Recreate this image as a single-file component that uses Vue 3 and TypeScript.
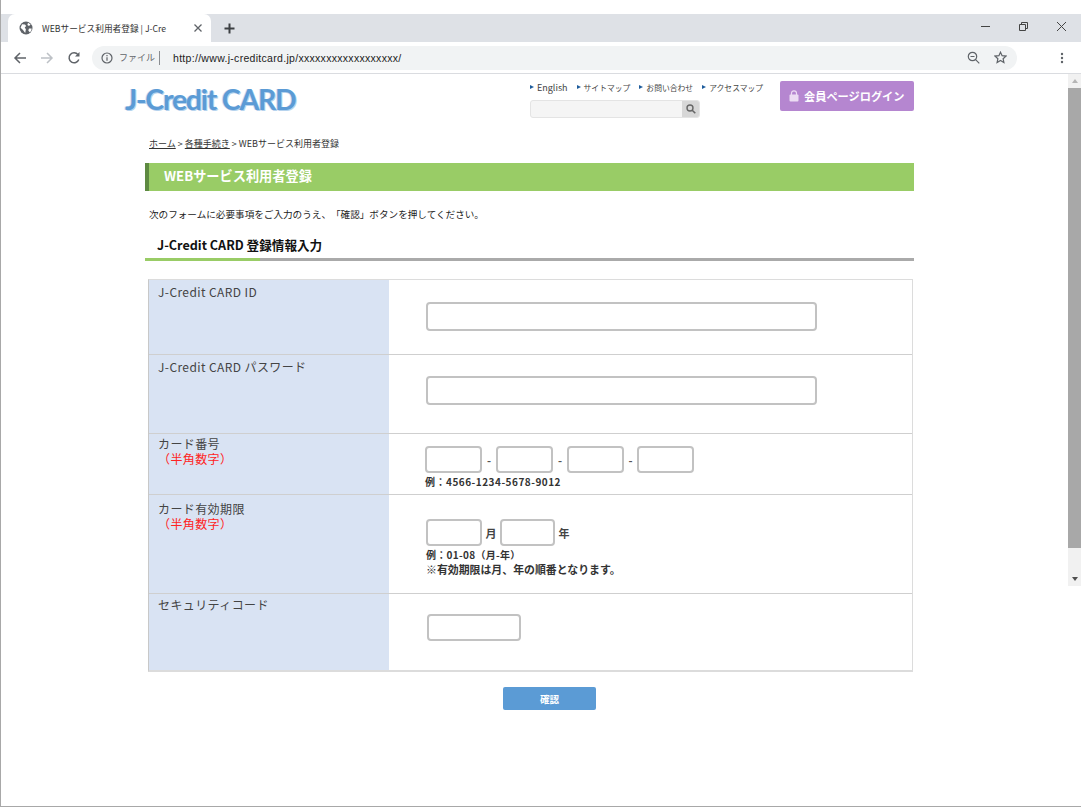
<script setup lang="ts">
const navLinks: string[] = ['English', 'サイトマップ', 'お問い合わせ', 'アクセスマップ']
</script>

<template>
  <div class="window">
    <header class="chrome">
      <div class="tabstrip">
        <div class="tab">
          <svg class="globe" width="14" height="14" viewBox="0 0 14 14">
            <circle cx="7" cy="7" r="6.5" fill="#5f6368" />
            <path d="M3 3.2l3 .3 1.2 1.6-1.5 1.4 1.2 1.8-.7 3.6L4 9 1.6 6.8zM9 1.8l2.6 1.7L10 5l-1.6-1zM10 7.4h2.6c0 1.6-.7 3-1.9 3.9L9.300 9.600z" fill="#fff" />
          </svg>
          <span class="tab-title">WEBサービス利用者登録 | J-Cre</span>
          <svg class="tab-close" width="10" height="10" viewBox="0 0 10 10">
            <path d="M1.500 1.500l7 7M8.500 1.500l-7 7" stroke="#5f6368" stroke-width="1.300" />
          </svg>
        </div>
        <svg class="new-tab" width="11" height="11" viewBox="0 0 11 11">
          <path d="M5.500.5v10M.5 5.500h10" stroke="#3c4043" stroke-width="2" />
        </svg>
        <div class="window-controls">
          <svg width="11" height="11" viewBox="0 0 11 11"><path d="M1 5.500h9" stroke="#444" /></svg>
          <svg width="11" height="11" viewBox="0 0 11 11"><path d="M1.500 3.500h6v6h-6zM3.500 3.500v-2h6v6h-2" fill="none" stroke="#444" /></svg>
          <svg width="11" height="11" viewBox="0 0 11 11"><path d="M1 1l9 9M10 1l-9 9" stroke="#444" /></svg>
        </div>
      </div>
      <div class="toolbar">
        <svg class="tool back" width="14" height="14" viewBox="0 0 14 14">
          <path d="M13 7H2M7 2L2 7l5 5" fill="none" stroke="#5f6368" stroke-width="1.500" />
        </svg>
        <svg class="tool forward" width="14" height="14" viewBox="0 0 14 14">
          <path d="M1 7h11M7 2l5 5-5 5" fill="none" stroke="#bdc1c6" stroke-width="1.500" />
        </svg>
        <svg class="tool reload" width="14" height="14" viewBox="0 0 14 14">
          <path d="M11.800 8.500A5 5 0 1 1 11 3.600" fill="none" stroke="#5f6368" stroke-width="1.500" />
          <path d="M12.500 1v4.500H8z" fill="#5f6368" />
        </svg>
        <div class="omnibox">
          <svg class="info" width="12" height="12" viewBox="0 0 12 12">
            <circle cx="6" cy="6" r="5" fill="none" stroke="#5f6368" stroke-width="1.200" />
            <path d="M6 5.200v3.600M6 3v1.200" stroke="#5f6368" stroke-width="1.200" />
          </svg>
          <span class="scheme">ファイル</span>
          <span class="scheme-sep"></span>
          <span class="url">http://www.j-creditcard.jp/xxxxxxxxxxxxxxxxxx/</span>
          <svg class="zoom-out" width="13" height="13" viewBox="0 0 13 13">
            <circle cx="5.500" cy="5.500" r="4.200" fill="none" stroke="#5f6368" stroke-width="1.200" />
            <path d="M8.600 8.600L12.300 12.300M3.500 5.500h4" stroke="#5f6368" stroke-width="1.200" />
          </svg>
          <svg class="star" width="13" height="13" viewBox="0 0 13 13">
            <path d="M6.500 1.200l1.600 3.500 3.800.4-2.800 2.600.8 3.800-3.400-2-3.400 2 .8-3.800L1.100 5.100l3.800-.4z" fill="none" stroke="#5f6368" stroke-width="1.200" />
          </svg>
        </div>
        <svg class="menu" width="4" height="12" viewBox="0 0 4 12">
          <circle cx="2" cy="2" r="1.200" fill="#5f6368" />
          <circle cx="2" cy="6" r="1.200" fill="#5f6368" />
          <circle cx="2" cy="10" r="1.200" fill="#5f6368" />
        </svg>
      </div>
    </header>

    <main class="page">
      <div class="site-header">
        <div class="logo">J-Credit CARD</div>
        <div class="util">
          <nav class="util-nav">
            <a v-for="link in navLinks" :key="link" class="util-link">{{ link }}</a>
          </nav>
          <div class="search">
            <span class="search-btn">
              <svg width="10" height="10" viewBox="0 0 10 10">
                <circle cx="4" cy="4" r="3" fill="none" stroke="#666" stroke-width="1.400" />
                <path d="M6.200 6.200L9.300 9.300" stroke="#666" stroke-width="1.600" />
              </svg>
            </span>
          </div>
        </div>
        <button class="login" type="button">
          <svg width="10" height="12" viewBox="0 0 10 12">
            <path d="M2.500 5V3.300a2.500 2.500 0 0 1 5 0V5" fill="none" stroke="#ecdcf3" stroke-width="1.200" />
            <rect x=".5" y="4.500" width="9" height="7" rx="1" fill="#ecdcf3" />
          </svg>
          <span>会員ページログイン</span>
        </button>
      </div>

      <div class="content">
        <p class="crumbs"><a>ホーム</a> &gt; <a>各種手続き</a> &gt; WEBサービス利用者登録</p>
        <h1 class="title">WEBサービス利用者登録</h1>
        <p class="lead">次のフォームに必要事項をご入力のうえ、「確認」ボタンを押してください。</p>
        <h2 class="subtitle">J-Credit CARD 登録情報入力</h2>

        <form class="form-table">
          <div class="row row-id">
            <div class="label">J-Credit CARD ID</div>
            <div class="field"><input class="input wide" type="text" /></div>
          </div>
          <div class="row row-pass">
            <div class="label">J-Credit CARD パスワード</div>
            <div class="field"><input class="input wide" type="password" /></div>
          </div>
          <div class="row row-card">
            <div class="label">カード番号<br /><span class="req">（半角数字）</span></div>
            <div class="field">
              <div class="inline">
                <input class="input card" type="text" /><span class="dash">-</span>
                <input class="input card" type="text" /><span class="dash">-</span>
                <input class="input card" type="text" /><span class="dash">-</span>
                <input class="input card" type="text" />
              </div>
              <div class="hint hint-card">例：4566-1234-5678-9012</div>
            </div>
          </div>
          <div class="row row-exp">
            <div class="label">カード有効期限<br /><span class="req">（半角数字）</span></div>
            <div class="field">
              <div class="inline">
                <input class="input month" type="text" /><span class="unit">月</span>
                <input class="input year" type="text" /><span class="unit">年</span>
              </div>
              <div class="hint">例：01-08（月-年）</div>
              <div class="hint hint-note">※有効期限は月、年の順番となります。</div>
            </div>
          </div>
          <div class="row row-cvc">
            <div class="label">セキュリティコード</div>
            <div class="field"><input class="input cvc" type="text" /></div>
          </div>
        </form>

        <div class="actions"><button class="confirm" type="button">確認</button></div>
      </div>

      <div class="scrollbar">
        <span class="arrow up"></span>
        <span class="thumb"></span>
        <span class="arrow down"></span>
      </div>
    </main>
  </div>
</template>

<style>
html, body { margin: 0; overflow: hidden; background: #fff; }
</style>

<style scoped>
.window {
  box-sizing: border-box;
  width: 1081px;
  height: 807px;
  border-left: 1px solid #a8a8a8;
  border-bottom: 1px solid #a8a8a8;
  background: #fff;
  font-family: "Noto Sans CJK JP", "Noto Sans", sans-serif;
  color: #222;
  display: flex;
  flex-direction: column;
  overflow: hidden;
  text-spacing-trim: space-all;
}
.chrome { padding-top: 14px; flex: none; }
.tabstrip {
  height: 28px;
  background: #dee1e6;
  display: flex;
  align-items: stretch;
  padding-left: 7px;
}
.tab {
  width: 203px;
  box-sizing: border-box;
  background: #fff;
  border-radius: 7px 7px 0 0;
  display: flex;
  align-items: center;
  padding-left: 11px;
}
.globe { flex: none; }
.tab-title {
  margin-left: 9px;
  font-size: 8.700px;
  white-space: nowrap;
  color: #333;
  width: 127px;
}
.tab-close { margin-left: 24px; flex: none; }
.new-tab { margin: 9px 0 0 13px; }
.window-controls {
  margin-left: auto;
  display: flex;
  gap: 27px;
  padding: 7px 14px 0 0;
}
.window-controls svg { display: block; }
.toolbar {
  height: 32px;
  box-sizing: border-box;
  background: #fff;
  border-bottom: 1px solid #dadce0;
  display: flex;
  align-items: center;
  padding: 3px 0 3px 12px;
  position: relative;
}
.tool { flex: none; }
.forward { margin-left: 13px; }
.reload { margin-left: 13px; }
.omnibox {
  margin-left: 11px;
  width: 925px;
  height: 24px;
  background: #f1f3f4;
  border-radius: 12px;
  display: flex;
  align-items: center;
  padding-left: 9px;
  box-sizing: border-box;
  flex: none;
}
.scheme { margin-left: 6px; font-size: 9px; color: #5f6368; width: 40px; white-space: nowrap; }
.scheme-sep { width: 1px; height: 14px; background: #8a8d91; margin-right: 13px; flex: none; }
.url { font-size: 10.500px; color: #222; font-family: "Liberation Sans", sans-serif; white-space: nowrap; width: 798px; letter-spacing: .3px; flex: none; }
.zoom-out { margin-left: -4px; flex: none; }
.star { margin-left: 14px; flex: none; }
.menu { margin-left: 43px; flex: none; }

.page { position: relative; flex: 1; min-height: 0; }
.site-header { display: flex; height: 60px; box-sizing: border-box; padding-left: 124px; }
.logo {
  margin-top: 7px;
  width: 405px;
  height: 36px;
  font-family: Lato, sans-serif;
  font-weight: 700;
  font-size: 28.500px;
  letter-spacing: -1.250px;
  line-height: 36px;
  color: #5b9bd5;
  text-shadow: 1px 1px 0 #b6d3ee, -1px 0 0 #cfe2f4;
  white-space: nowrap;
}
.util { width: 250px; padding-top: 6px; }
.util-nav { display: flex; height: 14px; align-items: center; gap: 9px; }
.util-link {
  font-size: 7.800px;
  color: #444;
  white-space: nowrap;
  display: flex;
  align-items: center;
}
.util-link:first-child { font-size: 9px; }
.util-link::before {
  content: "";
  border-left: 4px solid #1f5d9c;
  border-top: 2.500px solid transparent;
  border-bottom: 2.500px solid transparent;
  margin-right: 3px;
}
.search {
  margin-top: 6px;
  width: 170px;
  height: 18px;
  box-sizing: border-box;
  background: #f5f5f5;
  border: 1px solid #e4e4e4;
  border-radius: 3px;
  display: flex;
  justify-content: flex-end;
  overflow: hidden;
}
.search-btn {
  width: 17px;
  background: #d7d7d7;
  display: flex;
  align-items: center;
  justify-content: center;
}
.login {
  margin-top: 7px;
  width: 134px;
  height: 30px;
  border: 0;
  border-radius: 2px;
  background: #b586d0;
  color: #fff;
  font-family: inherit;
  font-size: 11.200px;
  font-weight: 700;
  display: flex;
  align-items: center;
  gap: 5px;
  padding: 0 0 0 9px;
  white-space: nowrap;
}
.content { width: 769px; margin-left: 144px; }
.crumbs { margin: 3px 0 0 4px; height: 14px; font-size: 9px; line-height: 14px; color: #333; white-space: nowrap; }
.crumbs a { text-decoration: underline; }
.title {
  margin: 12px 0 0;
  height: 28px;
  box-sizing: border-box;
  background: #99cc66;
  border-left: 4px solid #5e8a42;
  padding-left: 15px;
  color: #fff;
  font-size: 13.200px;
  font-weight: 700;
  line-height: 26px;
  white-space: nowrap;
}
.lead { margin: 16px 0 0 4px; font-size: 9.600px; line-height: 14px; color: #222; white-space: nowrap; }
.subtitle {
  margin: 10px 0 0;
  height: 30px;
  box-sizing: border-box;
  padding-left: 12px;
  font-size: 12.600px;
  font-weight: 700;
  line-height: 27px;
  color: #111;
  border-bottom: 3px solid #aaa;
  position: relative;
  white-space: nowrap;
}
.subtitle::after {
  content: "";
  position: absolute;
  left: 0;
  bottom: -3px;
  width: 115px;
  height: 3px;
  background: #99cc66;
}
.form-table {
  margin: 18px 0 0 3px;
  width: 765px;
  box-sizing: border-box;
  border: 1px solid #dcdcdc;
  border-left-color: #c8c8c8;
  border-bottom-width: 2px;
  display: flex;
  flex-direction: column;
}
.row { display: grid; grid-template-columns: 240px 1fr; border-bottom: 1px solid #cfcfcf; }
.row:last-child { border-bottom: 0; }
.row-id { height: 74px; }
.row-pass { height: 78px; }
.row-card { height: 60px; }
.row-exp { height: 98px; }
.row-cvc { height: 76px; }
.label {
  background: #d9e3f3;
  padding: 4px 0 0 9px;
  font-size: 12px;
  line-height: 15px;
  letter-spacing: .4px;
  color: #444;
  white-space: nowrap;
}
.row-card .label { padding-top: 2px; }
.row-exp .label { padding-top: 6px; }
.row-cvc .label { padding-top: 3px; }
.req { color: #f22; padding-left: 0; }
.field { padding-left: 37px; }
.input {
  display: block;
  box-sizing: border-box;
  border: 2px solid #c2c2c2;
  border-radius: 4px;
  background: #fff;
  padding: 0;
  margin: 0;
  outline: none;
}
.wide { width: 391px; height: 29px; }
.row-id .field { padding-top: 22px; }
.row-pass .field { padding-top: 21px; }
.row-card .field { padding: 12px 0 0 36px; }
.row-exp .field { padding: 24px 0 0 37px; }
.row-cvc .field { padding: 20px 0 0 38px; }
.inline { display: flex; align-items: center; }
.card { width: 57px; height: 27px; }
.dash { width: 14px; text-align: center; font-size: 11px; font-weight: 700; color: #555; }
.dash:nth-of-type(3) { width: 13px; }
.month { width: 56px; height: 27px; }
.year { width: 55px; height: 27px; }
.unit { width: 18px; text-align: center; font-size: 11px; font-weight: 700; color: #444; }
.hint { margin-top: 1px; font-size: 10px; letter-spacing: .3px; line-height: 15px; font-weight: 700; color: #333; white-space: nowrap; }
.hint-card { letter-spacing: .5px; }
.hint-note { margin-top: 0; font-size: 10.900px; letter-spacing: 0; }
.cvc { width: 94px; height: 27px; }
.actions { margin-top: 15px; padding-left: 358px; }
.confirm {
  display: block;
  width: 93px;
  height: 23px;
  border: 0;
  border-radius: 2px;
  background: #5b9bd5;
  color: #fff;
  font-family: inherit;
  font-size: 9.500px;
  font-weight: 700;
}
.scrollbar {
  position: absolute;
  right: 0;
  top: 0;
  width: 13px;
  height: 512px;
  background: #f1f1f1;
  display: flex;
  flex-direction: column;
  align-items: center;
}
.thumb { width: 13px; height: 460px; background: #a8a8a8; }
.arrow { width: 0; height: 0; border-left: 3.500px solid transparent; border-right: 3.500px solid transparent; }
.arrow.up { border-bottom: 4px solid #b5b5b5; margin: 5px 0 5px; }
.arrow.down { border-top: 4px solid #505050; margin-top: 29px; }
</style>
